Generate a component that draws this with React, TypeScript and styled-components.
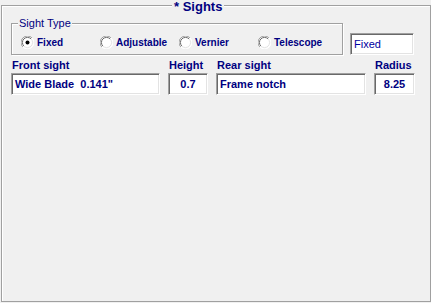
import React from 'react';
import styled, { createGlobalStyle } from 'styled-components';

const GlobalStyle = createGlobalStyle`
	html, body {
		margin: 0;
		padding: 0;
		background: #f0f0f0;
		font-family: 'Liberation Sans', Arial, sans-serif;
	}
`;

const sightTypes = ['Fixed', 'Adjustable', 'Vernier', 'Telescope'];

const RadioMark = ({ checked }: { checked: boolean }) => (
	<svg width='13' height='13' viewBox='0 0 13 13'>
		<circle cx='6.5' cy='6.5' r='6' fill='#fff' />
		<path d='M1.9 11.1 A6 6 0 0 1 11.1 1.9' fill='none' stroke='#a0a0a0' strokeWidth='1' />
		<path d='M2.9 10.1 A4.6 4.6 0 0 1 10.1 2.9' fill='none' stroke='#696969' strokeWidth='1' />
		<path d='M11.1 1.9 A6 6 0 0 1 1.9 11.1' fill='none' stroke='#fff' strokeWidth='1' />
		<path d='M10.1 2.9 A4.6 4.6 0 0 1 2.9 10.1' fill='none' stroke='#e3e3e3' strokeWidth='1' />
		{checked && <circle cx='6.5' cy='6.5' r='2' fill='#000' />}
	</svg>
);

const App = () => {
	const [sightType, setSightType] = React.useState('Fixed');

	return (
		<>
			<GlobalStyle />
			<Frame>
				<FrameTitle>* Sights</FrameTitle>
				<TopRow>
					<GroupBox>
						<GroupTitle>Sight Type</GroupTitle>
						<RadioRow>
							{sightTypes.map((t) => (
								<RadioOption key={t} onClick={() => setSightType(t)}>
									<RadioMark checked={sightType === t} />
									<span>{t}</span>
								</RadioOption>
							))}
						</RadioRow>
					</GroupBox>
					<TypeBox>{sightType}</TypeBox>
				</TopRow>
				<FieldRow>
					<Field $width={149}>
						<label>Front sight</label>
						<TextBox>Wide Blade&nbsp;&nbsp;0.141"</TextBox>
					</Field>
					<Field $width={40}>
						<label>Height</label>
						<TextBox $center>0.7</TextBox>
					</Field>
					<Field $width={150}>
						<label>Rear sight</label>
						<TextBox>Frame notch</TextBox>
					</Field>
					<Field $width={41}>
						<label>Radius</label>
						<TextBox $center>8.25</TextBox>
					</Field>
				</FieldRow>
			</Frame>
		</>
	);
};

const Frame = styled.section`
	position: relative;
	box-sizing: border-box;
	margin: 5px 0 0 1px;
	width: 430px;
	height: 297px;
	border: 1px solid #a0a0a0;
	box-shadow: inset 1px 1px 0 #fff, 1px 1px 0 #fff;
	padding: 17px 0 0 9px;
`;

const FrameTitle = styled.div`
	position: absolute;
	top: -6px;
	left: 170px;
	padding: 0 2px;
	background: #f0f0f0;
	color: #000080;
	font-size: 13px;
	font-weight: bold;
	line-height: 14px;
`;

const TopRow = styled.div`
	display: flex;
	align-items: flex-start;
	gap: 7px;
`;

const GroupBox = styled.div`
	position: relative;
	box-sizing: border-box;
	width: 332px;
	height: 32px;
	border: 1px solid #a0a0a0;
	box-shadow: inset 1px 1px 0 #fff, 1px 1px 0 #fff;
	padding: 12px 0 0 9px;
`;

const GroupTitle = styled.div`
	position: absolute;
	top: -6px;
	left: 6px;
	padding: 0 1px;
	background: #f0f0f0;
	color: #000080;
	font-size: 11px;
	line-height: 11px;
`;

const RadioRow = styled.div`
	display: flex;
`;

const RadioOption = styled.div`
	display: flex;
	align-items: center;
	gap: 3px;
	width: 79px;
	color: #000080;
	font-size: 10px;
	font-weight: bold;
	cursor: default;

	svg {
		flex: none;
	}
`;

const TypeBox = styled.div`
	box-sizing: border-box;
	margin-top: 10px;
	width: 64px;
	height: 22px;
	padding: 4px 3px 0;
	background: #fff;
	border: 1px solid;
	border-color: #a0a0a0 #fff #fff #a0a0a0;
	box-shadow: inset 1px 1px 0 #696969, inset -1px -1px 0 #e3e3e3;
	color: #0000a0;
	font-size: 11px;
`;

const FieldRow = styled.div`
	display: flex;
	gap: 8px;
	margin-top: 4px;
`;

const Field = styled.div<{ $width: number }>`
	display: flex;
	flex-direction: column;
	width: ${(p) => p.$width}px;

	label {
		color: #000080;
		font-size: 11px;
		font-weight: bold;
		line-height: 13px;
		margin-bottom: 1px;
		padding-left: 1px;
	}
`;

const TextBox = styled.div<{ $center?: boolean }>`
	box-sizing: border-box;
	height: 22px;
	padding: 4px 3px 0;
	background: #fff;
	border: 1px solid;
	border-color: #a0a0a0 #fff #fff #a0a0a0;
	box-shadow: inset 1px 1px 0 #696969, inset -1px -1px 0 #e3e3e3;
	color: #000080;
	font-size: 11px;
	font-weight: bold;
	white-space: nowrap;
	overflow: hidden;
	text-align: ${(p) => (p.$center ? 'center' : 'left')};
`;

export default App;
